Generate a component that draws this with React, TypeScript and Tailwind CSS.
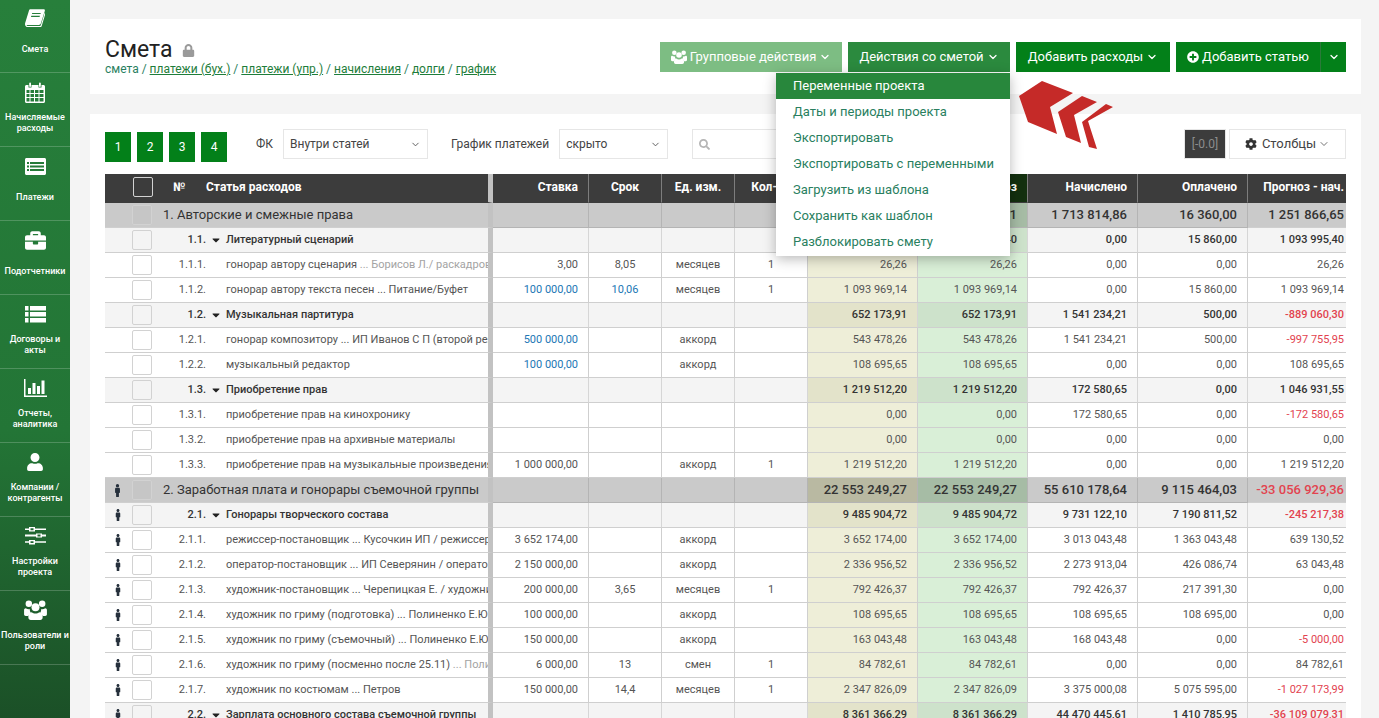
import React from 'react';
import { ChevronDown } from 'lucide-react';
import { FaBriefcase, FaCaretDown, FaCog, FaLock, FaMale, FaPlusCircle, FaSearch, FaUser } from 'react-icons/fa';

const BookIcon = () => (
  <svg width="20" height="18" viewBox="0 0 20 18" fill="white">
    <path fillRule="evenodd" d="M5.5 0.3h13.2c.9 0 1.4.7 1.1 1.6l-4 12.6c-.3 1-1 1.4-2 1.4H2.6c-.6 0-1 .2-1 .6s.4.6 1 .6h12.2c.5 0 .9-.3 1-.8l3.9-12.6.8.6-3.8 12.6c-.3 1-1 1.6-2 1.6H2.6C1 17.6 0 16.6 0 15c0-.5.1-1 .3-1.5L4 1.6C4.2.8 4.8.3 5.5.3zM7.2 4l-.3 1.1h8.6l.3-1.1zM6.3 6.8 6 7.9h8.6l.3-1.1z" />
  </svg>
);

const CalendarIcon = () => (
  <svg width="20" height="21" viewBox="0 0 20 21" fill="white">
    <path fillRule="evenodd" d="M1.5 3H3.5V5.5H6.5V3H13.5V5.5H16.5V3H18.5C19.3 3 20 3.7 20 4.5V19.5C20 20.3 19.3 21 18.5 21H1.5C.7 21 0 20.3 0 19.5V4.5C0 3.7.7 3 1.5 3ZM1.5 8V11H4.5V8ZM5.5 8V11H9V8ZM10 8V11H13.5V8ZM14.5 8V11H18.5V8ZM1.5 12V15H4.5V12ZM5.5 12V15H9V12ZM10 12V15H13.5V12ZM14.5 12V15H18.5V12ZM1.5 16V19.5H4.5V16ZM5.5 16V19.5H9V16ZM10 16V19.5H13.5V16ZM14.5 16V19.5H18.5V16Z" />
    <rect x="4.2" y="0.5" width="1.8" height="4.5" rx="0.9" />
    <rect x="14" y="0.5" width="1.8" height="4.5" rx="0.9" />
  </svg>
);

const ListAltIcon = () => (
  <svg width="21" height="17" viewBox="0 0 21 17" fill="white">
    <path fillRule="evenodd" d="M1.5 0H19.5C20.3 0 21 .7 21 1.5V15.5C21 16.3 20.3 17 19.5 17H1.5C.7 17 0 16.3 0 15.5V1.5C0 .7.7 0 1.5 0ZM2 4V6H4V4ZM5 4V6H19V4ZM2 7.5V9.5H4V7.5ZM5 7.5V9.5H19V7.5ZM2 11V13H4V11ZM5 11V13H19V11Z" />
  </svg>
);

const RowsIcon = () => (
  <svg width="21" height="17" viewBox="0 0 21 17" fill="white">
    <rect x="0" y="0" width="3.5" height="4.5" />
    <rect x="5" y="0" width="16" height="4.5" />
    <rect x="0" y="6" width="3.5" height="4.5" />
    <rect x="5" y="6" width="16" height="4.5" />
    <rect x="0" y="12" width="3.5" height="4.5" />
    <rect x="5" y="12" width="16" height="4.5" />
  </svg>
);

const ChartIcon = () => (
  <svg width="23" height="18" viewBox="0 0 23 18" fill="white">
    <rect x="0" y="0" width="1.5" height="18" />
    <rect x="0" y="16.5" width="23" height="1.5" />
    <rect x="4" y="9" width="3" height="6" />
    <rect x="8.5" y="4" width="3" height="11" />
    <rect x="13" y="7" width="3" height="8" />
    <rect x="17.5" y="1.5" width="3" height="13.5" />
  </svg>
);

const SlidersIcon = () => (
  <svg width="21" height="18" viewBox="0 0 21 18" fill="white">
    <path fillRule="evenodd" d="M0 1.5H4V0H10V1.5H21V3H10V4.5H4V3H0ZM5.5 1.2V3.3H8.5V1.2Z" />
    <path fillRule="evenodd" d="M0 7.5H11V6.5H17V7.5H21V9.5H17V10.5H11V9.5H0ZM12.5 7.5V9.5H15.5V7.5Z" />
    <path fillRule="evenodd" d="M0 14.2H4V13H10V14.2H21V15.7H10V17.5H4V15.7H0ZM5.5 14.3V16H8.5V14.3Z" />
  </svg>
);

const UsersIcon = ({ w, h }: { w: number; h: number }) => (
  <svg width={w} height={h} viewBox="0 0 24 21" fill="currentColor">
    <circle cx="5" cy="4" r="3.4" />
    <circle cx="19" cy="4" r="3.4" />
    <circle cx="12" cy="7.5" r="4.2" />
    <path d="M0 10.5c0-1 .8-1.8 1.8-1.8.8.7 1.9 1.1 3.2 1.1h1.2c-.4 1.6.2 3 1.2 4-1.6.6-2.6 1.7-3 3H1.8C.8 16.8 0 16 0 15z" />
    <path d="M24 10.5c0-1-.8-1.8-1.8-1.8-.8.7-1.9 1.1-3.2 1.1h-1.2c.4 1.6-.2 3-1.2 4 1.6.6 2.6 1.7 3 3h2.6c1 0 1.8-.8 1.8-1.8z" />
    <path d="M8 12.8c1 .9 2.500 1.400 4 1.400s3-.5 4-1.400c2 .2 3.500 1.800 3.500 4v1.700c0 1.400-1.100 2.500-2.500 2.500H7c-1.400 0-2.500-1.100-2.500-2.500v-1.700c0-2.200 1.500-3.800 3.500-4z" />
  </svg>
);

const nav = [
  { icon: <BookIcon />, label: 'Смета' },
  { icon: <CalendarIcon />, label: 'Начисляемые расходы' },
  { icon: <ListAltIcon />, label: 'Платежи' },
  { icon: <FaBriefcase size={21} color="white" />, label: 'Подотчетники' },
  { icon: <RowsIcon />, label: 'Договоры и акты' },
  { icon: <ChartIcon />, label: 'Отчеты, аналитика' },
  { icon: <FaUser size={18} color="white" />, label: 'Компании / контрагенты' },
  { icon: <SlidersIcon />, label: 'Настройки проекта' },
  { icon: <span className="text-white"><UsersIcon w={23} h={20} /></span>, label: 'Пользователи и роли' },
];

const menu = [
  'Переменные проекта',
  'Даты и периоды проекта',
  'Экспортировать',
  'Экспортировать с переменными',
  'Загрузить из шаблона',
  'Сохранить как шаблон',
  'Разблокировать смету',
];

type Row = {
  lvl: 1 | 2 | 3;
  num: string;
  title: string;
  note?: string;
  grayNote?: boolean;
  rate?: string;
  blue?: boolean;
  term?: string;
  unit?: string;
  qty?: string;
  plan: string;
  acc: string;
  paid: string;
  diff: string;
  man?: boolean;
};

const rows: Row[] = [
  { lvl: 1, num: '1.', title: 'Авторские и смежные права', plan: '2 965 681,51', acc: '1 713 814,86', paid: '16 360,00', diff: '1 251 866,65' },
  { lvl: 2, num: '1.1.', title: 'Литературный сценарий', plan: '1 093 995,40', acc: '0,00', paid: '15 860,00', diff: '1 093 995,40' },
  { lvl: 3, num: '1.1.1.', title: 'гонорар автору сценария', note: 'Борисов Л./ раскадровка', grayNote: true, rate: '3,00', term: '8,05', unit: 'месяцев', qty: '1', plan: '26,26', acc: '0,00', paid: '0,00', diff: '26,26' },
  { lvl: 3, num: '1.1.2.', title: 'гонорар автору текста песен', note: 'Питание/Буфет', rate: '100 000,00', blue: true, term: '10,06', unit: 'месяцев', qty: '1', plan: '1 093 969,14', acc: '0,00', paid: '15 860,00', diff: '1 093 969,14' },
  { lvl: 2, num: '1.2.', title: 'Музыкальная партитура', plan: '652 173,91', acc: '1 541 234,21', paid: '500,00', diff: '-889 060,30' },
  { lvl: 3, num: '1.2.1.', title: 'гонорар композитору', note: 'ИП Иванов С П (второй режиссер)', rate: '500 000,00', blue: true, unit: 'аккорд', plan: '543 478,26', acc: '1 541 234,21', paid: '500,00', diff: '-997 755,95' },
  { lvl: 3, num: '1.2.2.', title: 'музыкальный редактор', rate: '100 000,00', blue: true, unit: 'аккорд', plan: '108 695,65', acc: '0,00', paid: '0,00', diff: '108 695,65' },
  { lvl: 2, num: '1.3.', title: 'Приобретение прав', plan: '1 219 512,20', acc: '172 580,65', paid: '0,00', diff: '1 046 931,55' },
  { lvl: 3, num: '1.3.1.', title: 'приобретение прав на кинохронику', plan: '0,00', acc: '172 580,65', paid: '0,00', diff: '-172 580,65' },
  { lvl: 3, num: '1.3.2.', title: 'приобретение прав на архивные материалы', plan: '0,00', acc: '0,00', paid: '0,00', diff: '0,00' },
  { lvl: 3, num: '1.3.3.', title: 'приобретение прав на музыкальные произведения', rate: '1 000 000,00', unit: 'аккорд', qty: '1', plan: '1 219 512,20', acc: '0,00', paid: '0,00', diff: '1 219 512,20' },
  { lvl: 1, man: true, num: '2.', title: 'Заработная плата и гонорары съемочной группы', plan: '22 553 249,27', acc: '55 610 178,64', paid: '9 115 464,03', diff: '-33 056 929,36' },
  { lvl: 2, man: true, num: '2.1.', title: 'Гонорары творческого состава', plan: '9 485 904,72', acc: '9 731 122,10', paid: '7 190 811,52', diff: '-245 217,38' },
  { lvl: 3, man: true, num: '2.1.1.', title: 'режиссер-постановщик', note: 'Кусочкин ИП / режиссер', rate: '3 652 174,00', unit: 'аккорд', plan: '3 652 174,00', acc: '3 013 043,48', paid: '1 363 043,48', diff: '639 130,52' },
  { lvl: 3, man: true, num: '2.1.2.', title: 'оператор-постановщик', note: 'ИП Северянин / оператор', rate: '2 150 000,00', unit: 'аккорд', plan: '2 336 956,52', acc: '2 273 913,04', paid: '426 086,74', diff: '63 043,48' },
  { lvl: 3, man: true, num: '2.1.3.', title: 'художник-постановщик', note: 'Черепицкая Е. / художник', rate: '200 000,00', term: '3,65', unit: 'месяцев', qty: '1', plan: '792 426,37', acc: '792 426,37', paid: '217 391,30', diff: '0,00' },
  { lvl: 3, man: true, num: '2.1.4.', title: 'художник по гриму (подготовка)', note: 'Полиненко Е.Ю', rate: '100 000,00', unit: 'аккорд', plan: '108 695,65', acc: '108 695,65', paid: '108 695,00', diff: '0,00' },
  { lvl: 3, man: true, num: '2.1.5.', title: 'художник по гриму (съемочный)', note: 'Полиненко Е.Ю', rate: '150 000,00', unit: 'аккорд', plan: '163 043,48', acc: '168 043,48', paid: '0,00', diff: '-5 000,00' },
  { lvl: 3, man: true, num: '2.1.6.', title: 'художник по гриму (посменно после 25.11)', note: 'Полиненко Е.Ю', grayNote: true, rate: '6 000,00', term: '13', unit: 'смен', qty: '1', plan: '84 782,61', acc: '0,00', paid: '0,00', diff: '84 782,61' },
  { lvl: 3, man: true, num: '2.1.7.', title: 'художник по костюмам', note: 'Петров', rate: '150 000,00', term: '14,4', unit: 'месяцев', qty: '1', plan: '2 347 826,09', acc: '3 375 000,08', paid: '5 075 595,00', diff: '-1 027 173,99' },
  { lvl: 2, man: true, num: '2.2.', title: 'Зарплата основного состава съемочной группы', plan: '8 361 366,29', acc: '44 470 445,61', paid: '1 410 785,95', diff: '-36 109 079,31' },
];

const rowStyle = {
  1: { line: 'border-b-[#b4b4b4] border-r-[#b4b4b4]', font: 'text-[13px] font-medium', text: 'text-[#333]', bg: 'bg-[#cacaca]', plan: 'bg-[#b9b9a2]', fact: 'bg-[#a6bca5]' },
  2: { line: 'border-b-[#cfcfcf] border-r-[#d6d6d6]', font: 'text-[11px] font-medium', text: 'text-[#333]', bg: 'bg-[#f4f4f4]', plan: 'bg-[#e3e3ca]', fact: 'bg-[#cde2cb]' },
  3: { line: 'border-b-[#cfcfcf] border-r-[#cfcfcf]', font: 'text-[11px]', text: 'text-[#555]', bg: 'bg-white', plan: 'bg-[#eeeed8]', fact: 'bg-[#d9efd7]' },
};

const TableRow = ({ row }: { row: Row }) => {
  const s = rowStyle[row.lvl];
  const base = `h-[25px] p-0 border-b whitespace-nowrap overflow-hidden ${s.font}`;
  const cell = `${base} border-r ${s.line}`;
  const num = 'text-right pr-[10px]';
  const mid = 'text-center';
  const rateColor = row.blue ? 'text-[#2277b5]' : s.text;
  return (
    <tr>
      <td className={`${base} border-r-[5px] border-b-[#cfcfcf] border-r-[#c2c2c2] ${row.lvl === 1 ? 'font-normal' : ''} ${s.bg} ${s.text}`}>
        <div className="flex items-center h-[24px] overflow-hidden">
          <span className="w-[27px] pr-[2px] flex justify-center shrink-0">
            {row.man && <FaMale size={row.lvl === 1 ? 13 : 12} color="#26303c" />}
          </span>
          <span className={`w-[20px] h-[20px] shrink-0 rounded-[2px] border border-[#d2d2d2] ${row.lvl === 1 ? 'bg-[#c6c6c6]' : row.lvl === 2 ? 'bg-[#f4f4f4]' : 'bg-white'}`} />
          {row.lvl === 1 ? (
            <span className="ml-[11px]">{row.num} {row.title}</span>
          ) : (
            <>
              <span className="w-[54px] shrink-0 text-right">{row.num}</span>
              <span className="w-[20px] shrink-0 flex justify-center">
                {row.lvl === 2 && <FaCaretDown size={12} color="#222" />}
              </span>
              <span>
                {row.title}
                {row.note && <span className={row.grayNote ? 'text-[#a3a3a3]' : ''}> ... {row.note}</span>}
              </span>
            </>
          )}
        </div>
      </td>
      <td className={`${cell} ${s.bg} ${rateColor} ${num}`}>{row.rate}</td>
      <td className={`${cell} ${s.bg} ${rateColor} ${mid}`}>{row.term}</td>
      <td className={`${cell} ${s.bg} ${s.text} ${mid}`}>{row.unit}</td>
      <td className={`${cell} ${s.bg} ${s.text} ${mid}`}>{row.qty}</td>
      <td className={`${cell} ${s.plan} ${s.text} ${num}`}>{row.plan}</td>
      <td className={`${cell} ${s.fact} ${s.text} ${num}`}>{row.plan}</td>
      <td className={`${cell} ${s.bg} ${s.text} ${num}`}>{row.acc}</td>
      <td className={`${cell} ${s.bg} ${s.text} ${num}`}>{row.paid}</td>
      <td className={`${base} border-b-[#cfcfcf] ${s.bg} text-right pr-[2px] ${row.diff.startsWith('-') ? 'text-[#e2434f]' : s.text}`}>{row.diff}</td>
    </tr>
  );
};

const Select = ({ value, width }: { value: string; width: string }) => (
  <div className={`${width} h-[30px] border border-[#e6e6e6] bg-white flex items-center justify-between pl-[6px] pr-[6px] text-[12px] text-[#444]`}>
    <span>{value}</span>
    <ChevronDown size={11} strokeWidth={2} color="#555" />
  </div>
);

const Btn = ({ className, children }: { className: string; children: React.ReactNode }) => (
  <button className={`h-[30px] flex items-center justify-center gap-[3px] text-[13px] text-white ${className}`}>{children}</button>
);

const th = 'h-[29px] p-0 pb-[2px] border-r border-b border-r-[#7d7d7d] border-b-[#3c3c3c] text-[12px] font-bold text-white whitespace-nowrap overflow-hidden';

export default function App() {
  return (
    <div className="flex h-screen overflow-hidden bg-[#f4f4f4] font-[Roboto,sans-serif] relative">
      <aside className="w-[70px] shrink-0 bg-linear-to-b from-[#277f3b] via-[#237536] via-60% to-[#1b5027]">
        <div className="-mt-[1px]">
          {nav.map((item) => (
            <div key={item.label} className="h-[74px] border-b border-white/20 flex flex-col items-center">
              <div className="h-[24px] mt-[7px] flex items-center justify-center">{item.icon}</div>
              <div className="h-[24px] mt-[7px] flex items-center justify-center text-center text-[9px] leading-[11px] font-medium text-white">
                {item.label}
              </div>
            </div>
          ))}
        </div>
      </aside>

      <main className="flex-1 min-w-0 pt-[19px] pl-[20px] pr-[18px]">
        <section className="h-[75px] bg-white flex justify-between pl-[15px] pr-[15px]">
          <div className="pt-[19px]">
            <h1 className="flex items-center gap-[9px] text-[23px] leading-[24px] text-[#222]">
              Смета <FaLock size={13} color="#9a9a9a" />
            </h1>
            <div className="text-[12px] leading-[14px] text-[#2a7f5f]">
              смета / <a className="underline text-[#1e7d3a]">платежи (бух.)</a> / <a className="underline text-[#1e7d3a]">платежи (упр.)</a> / <a className="underline text-[#1e7d3a]">начисления</a> / <a className="underline text-[#1e7d3a]">долги</a> / <a className="underline text-[#1e7d3a]">график</a>
            </div>
          </div>
          <div className="pt-[23px] flex gap-[6px]">
            <Btn className="w-[182px] bg-[#7dbd83]">
              <UsersIcon w={16} h={14} /> Групповые действия <ChevronDown size={12} strokeWidth={2.5} />
            </Btn>
            <Btn className="w-[162px] bg-[#2b8a3e]">
              Действия со сметой <ChevronDown size={12} strokeWidth={2.5} />
            </Btn>
            <Btn className="w-[154px] bg-[#038019]">
              Добавить расходы <ChevronDown size={12} strokeWidth={2.5} />
            </Btn>
            <div className="flex">
              <Btn className="w-[145px] bg-[#038019] border-r border-[#2b7a3a]">
                <FaPlusCircle size={12} /> Добавить статью
              </Btn>
              <Btn className="w-[25px] bg-[#038019]">
                <ChevronDown size={12} strokeWidth={2.5} />
              </Btn>
            </div>
          </div>
        </section>

        <section className="mt-[20px] bg-white px-[15px] pt-[15px] h-[620px]">
          <div className="flex items-start h-[30px]">
            <div className="flex gap-[6px] mt-[3px]">
              {['1', '2', '3', '4'].map((n) => (
                <button key={n} className="w-[26px] h-[30px] bg-[#038019] text-white text-[12px]">{n}</button>
              ))}
            </div>
            <span className="ml-[29px] mr-[10px] leading-[30px] text-[12px] text-[#444]">ФК</span>
            <Select value="Внутри статей" width="w-[145px]" />
            <span className="ml-[23px] mr-[10px] leading-[30px] text-[12px] text-[#444]">График платежей</span>
            <Select value="скрыто" width="w-[109px]" />
            <div className="ml-[24px] w-[300px] h-[30px] border border-[#e6e6e6] flex items-center pl-[6px]">
              <FaSearch size={11} color="#b5b5b5" />
            </div>
            <div className="ml-auto w-[42px] h-[30px] bg-[#3c3c3c] border border-[#e6e6e6] flex items-center justify-center text-[12px] text-[#8d8d8d]">[-0.0]</div>
            <button className="ml-[3px] w-[117px] h-[30px] border border-[#e6e6e6] flex items-center justify-center gap-[5px] text-[13px] text-[#444]">
              <FaCog size={12} color="#333" /> Столбцы <ChevronDown size={12} strokeWidth={1.5} className="-ml-[3px]" />
            </button>
          </div>

          <table className="mt-[15px] table-fixed border-separate border-spacing-0 w-[1241px]">
            <colgroup>
              <col className="w-[388px]" />
              <col className="w-[96px]" />
              <col className="w-[73px]" />
              <col className="w-[73px]" />
              <col className="w-[73px]" />
              <col className="w-[110px]" />
              <col className="w-[110px]" />
              <col className="w-[110px]" />
              <col className="w-[110px]" />
              <col className="w-[98px]" />
            </colgroup>
            <thead>
              <tr className="bg-[#3c3c3c]">
                <th className={`${th} border-r-[5px] border-r-[#c2c2c2] text-left`}>
                  <div className="flex items-center">
                    <span className="ml-[28px] w-[20px] h-[20px] rounded-[2px] border border-[#d2d2d2]" />
                    <span className="ml-[20px] w-[33px]">№</span>
                    <span>Статья расходов</span>
                  </div>
                </th>
                <th className={`${th} text-right pr-[10px]`}>Ставка</th>
                <th className={th}>Срок</th>
                <th className={th}>Ед. изм.</th>
                <th className={th}>Кол-во</th>
                <th className={`${th} text-right pr-[10px] bg-[#3a3a22]`}>Бюджет</th>
                <th className={`${th} text-right pr-[10px] bg-[#13300f]`}>Прогноз</th>
                <th className={`${th} text-right pr-[10px]`}>Начислено</th>
                <th className={`${th} text-right pr-[10px]`}>Оплачено</th>
                <th className={`${th} border-r-0 text-right pr-[2px]`}>Прогноз - нач.</th>
              </tr>
            </thead>
            <tbody>
              {rows.map((row) => (
                <TableRow key={row.num} row={row} />
              ))}
            </tbody>
          </table>
        </section>
      </main>

      {/* dropdown under "Действия со сметой" */}
      <div className="absolute left-[776px] top-[73px] w-[234px] h-[183px] bg-white shadow-[0_3px_12px_rgba(0,0,0,0.28)]">
        {menu.map((item, i) => (
          <div
            key={item}
            className={`h-[26px] pl-[17px] flex items-center text-[13px] ${i === 0 ? 'bg-[#28873c] text-white' : 'text-[#2a7f5f]'}`}
          >
            {item}
          </div>
        ))}
      </div>

      {/* red pointer */}
      <svg className="absolute left-[1019px] top-[81px]" width="95" height="69" viewBox="1019 81 95 69" fill="#c52a28">
        <polygon points="1019,96 1042,81 1073,93 1050,107 1057,134 1028,122" />
        <polygon points="1082,96 1097,102 1074,115 1081,143 1066,137 1058,112" />
        <polygon points="1106,104 1113,107 1088,121 1097,149 1089,147 1082,122" />
      </svg>
    </div>
  );
}
